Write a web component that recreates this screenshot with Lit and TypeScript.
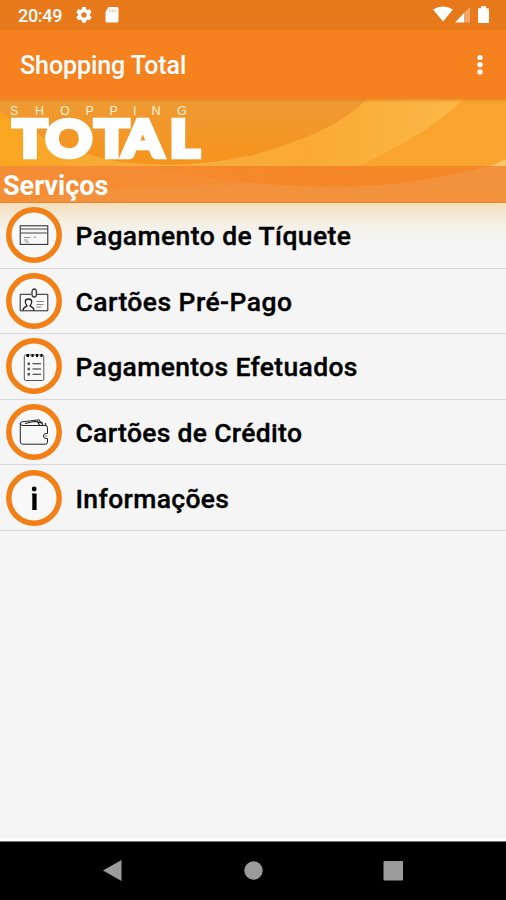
import { LitElement, html, css, svg } from "lit";
import { customElement } from "lit/decorators.js";

const icons = {
  ticket: svg`<rect x="14.2" y="18.800" width="27.600" height="18.600"/><path d="M14.200 22h27.600M14.200 26h27.600" stroke-width="1.100" stroke="#444"/><path d="M18 30.500h6.500M27.500 30.200h2.500M18 33h4M19 35h4" stroke-width=".8" stroke="#777"/>`,
  badge: svg`<path d="M25 21.300H14.200v16.500h27.600V21.300H31"/><path d="M26 21.500v-2.500a2.200 3 0 0 1 4.400 0v2.500a2.200 2.500 0 0 1-4.400 0z" stroke="#333" stroke-width="1.300"/><path d="M17 37.500c0-3 2-3.500 4-4.500-3-4-2-7 1.500-7s4.500 3 1.500 7c2 1 4 1.500 4 4.500" stroke-width="1.300"/><path d="M30.500 28.500h7.500M30.500 31.500h7M30.500 34h5" stroke-width=".9" stroke="#777"/>`,
  list: svg`<rect x="18.300" y="17" width="19.500" height="25.500" rx="1.500" stroke="#555"/><path d="M20.500 17.500h2.500M25.500 17.500h2M30 17.500h2M34.500 17.500h2" stroke="#000" stroke-width="2.800"/><path d="M21.500 25.800h2.500M21.500 31h2.500M21.500 36.200h2.500" stroke-width="2.600" stroke="#555"/><path d="M26.500 25.800h8.500M26.500 31h8.500M26.500 36.200h8.500" stroke-width="1.100"/>`,
  wallet: svg`<path d="M14.300 19v19q0 2.200 2.200 2.200h23q2 0 2-2V35M41.500 29v-5.500q0-2-2-2H17q-2.700 0-2.700-2.200 0-1.300 2-1.500l17-2 2 4"/><path d="M19 19.500l9-2 8 1 .5 2.500M31 17l2.500 4M39.500 19v3" stroke-width="1.200"/><path d="M41.800 29.500h-2q-2.300 0-2.300 2.500t2.300 2.500h2"/><path d="M39.500 32h1" stroke-width="1.600"/>`,
  info: svg`<circle cx="28.200" cy="19" r="2.400" fill="#000" stroke="none"/><path d="M25.900 23.500h4.700V40h-4.300V25h-.4z" fill="#000" stroke="none"/>`,
};

const services = [
  { label: "Pagamento de Tíquete", icon: icons.ticket, width: 275.5 },
  { label: "Cartões Pré-Pago", icon: icons.badge, width: 216.5 },
  { label: "Pagamentos Efetuados", icon: icons.list, width: 282 },
  { label: "Cartões de Crédito", icon: icons.wallet, width: 226.5 },
  { label: "Informações", icon: icons.info, width: 153.5 },
];

@customElement("app-root")
export class AppRoot extends LitElement {
  static styles = css`
    :host {
      display: flex;
      flex-direction: column;
      width: 506px;
      height: 900px;
      overflow: hidden;
      background: #f5f5f5;
      color: #000;
      font-family: Roboto, "Liberation Sans", sans-serif;
    }
    svg { display: block; flex: none; }
    .status {
      height: 30px;
      flex: none;
      display: flex;
      align-items: center;
      background: #e8791a;
      color: #fff;
      padding: 0 14px 0 18px;
      box-sizing: border-box;
    }
    .clock { font-size: 18px; font-weight: 500; line-height: 30px; width: 58px; letter-spacing: -.3px; padding-top: 2px; }
    .spacer { flex: 1; }
    .toolbar {
      height: 69px;
      flex: none;
      display: flex;
      align-items: center;
      justify-content: space-between;
      background: #f5821f;
      color: #fff;
      padding: 1px 22px 0 20px;
      box-sizing: border-box;
    }
    .title { font-size: 25px; font-weight: 500; white-space: nowrap; letter-spacing: -.07px; padding-top: 1px; }
    .hero { position: relative; height: 104px; flex: none; display: flow-root; }
    .swirl { position: absolute; inset: 0; }
    .section {
      position: relative;
      margin-top: 67px;
      height: 37px;
      padding-left: 3px;
      color: #fff;
      font-size: 27px;
      font-weight: 700;
      line-height: 41px;
      box-sizing: border-box;
      border-bottom: 1px solid #ee8426;
    }
    .list {
      flex: 1;
      background: linear-gradient(#f6dfbd, #f5e6ce 9px, #f4f1e8 23px, #f5f5f5 40px);
    }
    .row {
      height: 65.600px;
      display: flex;
      align-items: center;
      padding-left: 6px;
      gap: 14px;
      box-sizing: border-box;
      border-bottom: 1px solid #d9d9d9;
    }
    .label { font-size: 26.500px; font-weight: 500; stroke: #000; stroke-width: .35px; }
    .ring { fill: #f8f8f8; stroke: #f28016; stroke-width: 5.500; }
    .glyph { fill: none; stroke: #222; stroke-width: 1; }
    .nav {
      height: 59px;
      flex: none;
      background: #000;
      border-top: 1px solid #777;
      box-shadow: 0 -3px #fff;
      box-sizing: border-box;
    }
  `;

  render() {
    return html`
      <div class="status">
        <span class="clock">20:49</span>
        <svg width="16" height="16" viewBox="0 0 16 16">
          <path fill="#fff" fill-rule="evenodd" d="M6.200 0h3.600l.5 2.300 1.300.8 2.200-.8 1.900 3-1.700 1.600v1.700l1.700 1.700-1.900 3-2.200-.7-1.300.8-.5 2.300H6.200l-.5-2.300-1.300-.8-2.200.7-1.900-3L2 8.600V6.900L.3 5.300l1.900-3 2.200.8 1.300-.8zM8 5.200a2.700 2.700 0 1 0 0 5.400 2.700 2.700 0 0 0 0-5.400z"/>
        </svg>
        <svg width="42" height="16" viewBox="0 0 42 16">
          <path fill="#fff" d="M16.500 0h8.500Q26.500 0 26.500 1.500v12.500q0 1.500-1.500 1.500h-10q-1.500 0-1.500-1.500V5z"/>
          <path d="M17.500 2.500v2.500M20.200 2.500v2.500M22.900 2.500v2.500" stroke="#efb484" stroke-width="1.200"/>
        </svg>
        <span class="spacer"></span>
        <svg width="59" height="18" viewBox="0 0 59 18">
          <path fill="#fff" d="M0 3.500q10-6 20 0L10 15.500z"/>
          <path fill="#f0a76c" d="M30 8l7-7v15.500h-7z"/>
          <path fill="#fff" d="M22 16.500l9-9.500v9.500z"/>
          <path fill="#fff" d="M46 2.200H48V.3h5v1.900h2q1 0 1 1V16q0 1-1 1h-9q-1 0-1-1V3.200q0-1 1-1z"/>
        </svg>
      </div>
      <div class="toolbar">
        <span class="title">Shopping Total</span>
        <svg width="8" height="24" viewBox="0 0 8 24" fill="#fff">
          <circle cx="4" cy="4.500" r="2.600"/><circle cx="4" cy="11.700" r="2.600"/><circle cx="4" cy="18.900" r="2.600"/>
        </svg>
      </div>
      <div class="hero">
        <svg class="swirl" width="506" height="104" viewBox="0 99 506 104">
          <defs>
            <linearGradient id="dark" x1="0" y1="0" x2="0" y2="1"><stop offset="0" stop-color="#ef9a34"/><stop offset="1" stop-color="#f6941c"/></linearGradient>
            <linearGradient id="band" x1="0" y1="0" x2="1" y2="0"><stop offset="0" stop-color="#f9a51f"/><stop offset=".35" stop-color="#f6ad42"/><stop offset=".65" stop-color="#faaa34"/><stop offset="1" stop-color="#fbb846"/></linearGradient>
            <linearGradient id="shade" x1="0" y1="0" x2="0" y2="1"><stop offset="0" stop-color="#d96c10" stop-opacity=".5"/><stop offset="1" stop-color="#e08020" stop-opacity="0"/></linearGradient>
            <linearGradient id="deep" x1="0" y1="0" x2="1" y2="0"><stop offset="0" stop-color="#f48c30"/><stop offset=".5" stop-color="#f68726"/></linearGradient>
          </defs>
          <rect y="99" width="506" height="68" fill="#f8a42e"/>
          <path fill="url(#band)" d="M0 99h464Q428 134 357 167H0z"/>
          <path fill="url(#dark)" d="M0 99h367Q336 132 253 155Q185 170 120 162Q50 148 0 112z"/>
          <path fill="#fac36a" d="M487 167Q498 163 506 159v8z"/>
          <rect y="99" width="506" height="4" fill="url(#shade)"/>
          <rect y="166" width="506" height="37" fill="#f3923c"/>
          <path fill="url(#deep)" d="M130 166h357Q400 191 300 186Q210 182 130 166z"/>
          <path fill="#f48b2f" d="M0 166h130Q190 179 253 184Q120 186 0 203z" opacity=".7"/>
          <g fill="#fff">
            <text x="10 35 60 85.500 109.500 133 151.500 177" y="115" font-family="Liberation Sans" font-size="12.500" fill="#fff3dc">SHOPPING</text>
            <text transform="scale(1.130 1)" x="11.200 40.400 83.700 108.600 150.200" y="157" font-family="Lato" font-weight="900" font-size="50.500" stroke="#fff" stroke-width="4.500">TOTAL</text>
          </g>
        </svg>
        <div class="section">Serviços</div>
      </div>
      <div class="list">
        ${services.map((s) => html`
          <div class="row">
            <svg width="56" height="56" viewBox="0 0 56 56">
              <circle class="ring" cx="28" cy="28" r="25.200"/>
              <g class="glyph">${s.icon}</g>
            </svg>
            <svg width="300" height="40" viewBox="0 0 300 40">
              <text class="label" x="-.5" y="30" textLength=${s.width}>${s.label}</text>
            </svg>
          </div>`)}
      </div>
      <div class="nav">
        <svg width="506" height="58" viewBox="0 0 506 58" fill="#9b9b9b">
          <path d="M103 28.500L121.500 18v21z"/>
          <circle cx="253.500" cy="28.500" r="9.200"/>
          <rect x="383.500" y="19" width="19.500" height="19.500" rx="1"/>
        </svg>
      </div>
    `;
  }
}
